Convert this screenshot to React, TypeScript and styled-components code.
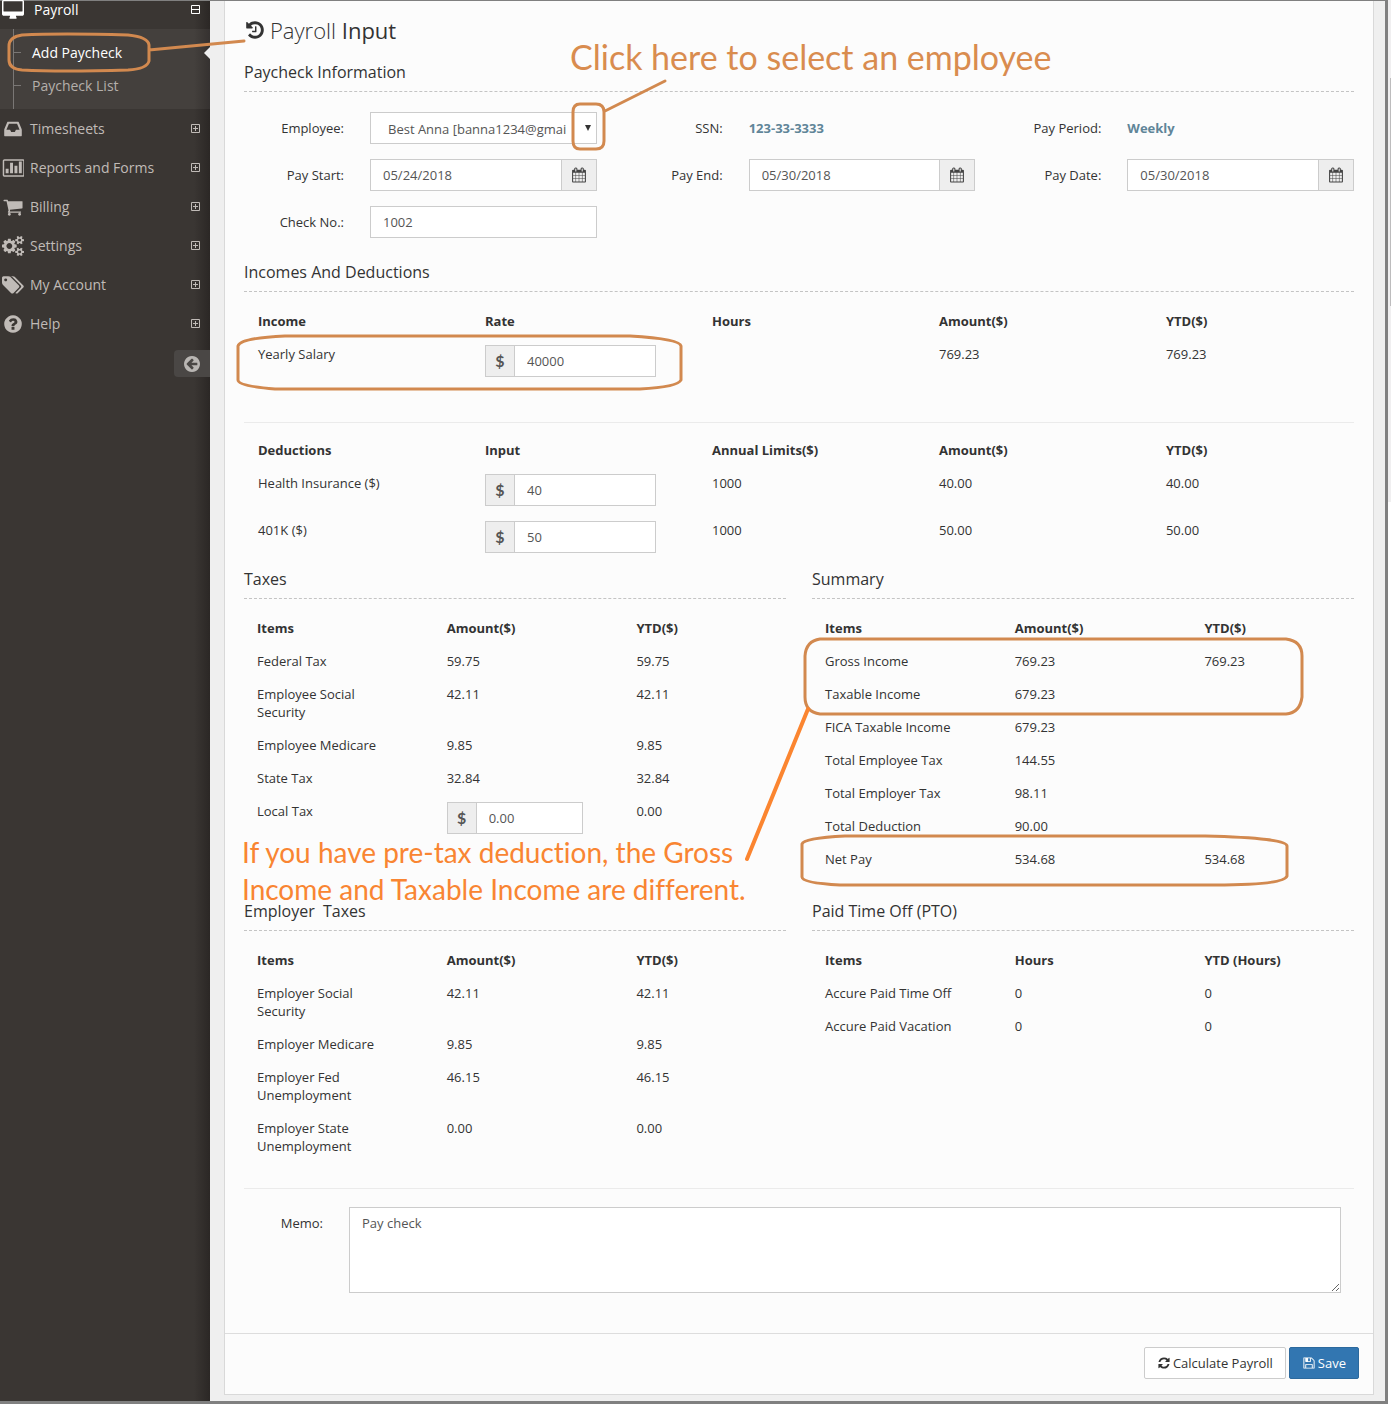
import React from 'react';
import styled, { createGlobalStyle, css } from 'styled-components';

const GlobalStyle = createGlobalStyle`
  *, *::before, *::after { box-sizing: border-box; }
  body {
    margin: 0;
    background: #fff;
    color: #333;
    font: 13px/18px "Open Sans", "Noto Sans", sans-serif;
  }
  input, select, textarea, button { font: inherit; border-radius: 0; }
`;

/* ---------- icons ---------- */

const ICONS = {
  desktop:
    'M1728 992v-832q0-13-9.5-22.5t-22.5-9.5h-1600q-13 0-22.5 9.5t-9.5 22.5v832q0 13 9.5 22.5t22.5 9.5h1600q13 0 22.5-9.5t9.5-22.5zm128-832v1088q0 66-47 113t-113 47h-544q0 37 16 77.5t32 71 16 43.5q0 26-19 45t-45 19h-512q-26 0-45-19t-19-45q0-14 16-44t32-70 16-78h-544q-66 0-113-47t-47-113v-1088q0-66 47-113t113-47h1600q66 0 113 47t47 113z',
  inbox:
    'M1151 960h316q-1-3-2.5-8t-2.5-8l-212-496h-708l-212 496q-1 2-2.5 8t-2.5 8h316l95 192h320zm513 30v482q0 26-19 45t-45 19h-1408q-26 0-45-19t-19-45v-482q0-62 25-123l238-552q10-25 36.5-42t52.5-17h832q26 0 52.5 17t36.5 42l238 552q25 61 25 123z',
  chart:
    'M512 960v384h-256v-384h256zm384-512v896h-256v-896h256zm384 256v640h-256v-640h256zm384-384v1024h-256v-1024h256zm128 1184v-1216q0-13-9.500-22.500t-22.500-9.500h-1600q-13 0-22.500 9.500t-9.500 22.500v1216q0 13 9.500 22.500t22.500 9.500h1600q13 0 22.500-9.500t9.500-22.500zm128-1216v1216q0 66-47 113t-113 47h-1600q-66 0-113-47t-47-113v-1216q0-66 47-113t113-47h1600q66 0 113 47t47 113z',
  cart:
    'M704 1536q0 52-38 90t-90 38-90-38-38-90 38-90 90-38 90 38 38 90zm896 0q0 52-38 90t-90 38-90-38-38-90 38-90 90-38 90 38 38 90zm128-1088v512q0 24-16.5 42.5t-40.5 21.5l-1044 122q13 60 13 70 0 16-24 64h920q26 0 45 19t19 45-19 45-45 19h-1024q-26 0-45-19t-19-45q0-11 8-31.5t16-36 21.5-40 15.5-29.5l-177-823h-204q-26 0-45-19t-19-45 19-45 45-19h256q16 0 28.500 6.500t19.500 15.500 13 24.500 8 26 5.500 29.500 4.500 26h1201q26 0 45 19t19 45z',
  cogs:
    'M832 896q0-106-75-181t-181-75-181 75-75 181 75 181 181 75 181-75 75-181zm768 512q0-52-38-90t-90-38-90 38-38 90q0 53 37.5 90.5t90.5 37.5 90.5-37.5 37.5-90.5zm0-1024q0-52-38-90t-90-38-90 38-38 90q0 53 37.5 90.5t90.5 37.5 90.5-37.5 37.5-90.5zm-384 421v185q0 10-7 19.5t-16 10.5l-155 24q-11 35-32 76 34 48 90 115 7 11 7 20 0 12-7 19-23 30-82.5 89.5t-78.5 59.5q-11 0-21-7l-115-90q-37 19-77 31-11 108-23 155-7 24-30 24h-186q-11 0-20-7.5t-10-17.5l-23-153q-34-10-75-31l-118 89q-7 7-20 7-11 0-21-8-144-133-144-160 0-9 7-19 10-14 41-53t47-61q-23-44-35-82l-152-24q-10-1-17-9.5t-7-19.5v-185q0-10 7-19.5t16-10.5l155-24q11-35 32-76-34-48-90-115-7-11-7-20 0-12 7-20 22-30 82-89t79-59q11 0 21 7l115 90q34-18 77-32 11-108 23-154 7-24 30-24h186q11 0 20 7.500t10 17.500l23 153q34 10 75 31l118-89q8-7 20-7 11 0 21 8 144 133 144 160 0 8-7 19-12 16-42 54t-45 60q23 48 34 82l152 23q10 2 17 10.5t7 19.5zm640 533v140q0 16-149 31-12 27-30 52 51 113 51 138 0 4-4 7-122 71-124 71-8 0-46-47t-52-68q-20 2-30 2t-30-2q-14 21-52 68t-46 47q-2 0-124-71-4-3-4-7 0-25 51-138-18-25-30-52-149-15-149-31v-140q0-16 149-31 13-29 30-52-51-113-51-138 0-4 4-7 4-2 35-20t59-34 30-16q8 0 46 46.5t52 67.5q20-2 30-2t30 2q51-71 92-112l6-2q4 0 124 70 4 3 4 7 0 25-51 138 17 23 30 52 149 15 149 31zm0-1024v140q0 16-149 31-12 27-30 52 51 113 51 138 0 4-4 7-122 71-124 71-8 0-46-47t-52-68q-20 2-30 2t-30-2q-14 21-52 68t-46 47q-2 0-124-71-4-3-4-7 0-25 51-138-18-25-30-52-149-15-149-31v-140q0-16 149-31 13-29 30-52-51-113-51-138 0-4 4-7 4-2 35-20t59-34 30-16q8 0 46 46.5t52 67.5q20-2 30-2t30 2q51-71 92-112l6-2q4 0 124 70 4 3 4 7 0 25-51 138 17 23 30 52 149 15 149 31z',
  tags:
    'M384 448q0-53-37.5-90.5t-90.5-37.5-90.5 37.5-37.5 90.5 37.5 90.5 90.5 37.5 90.5-37.5 37.5-90.5zm1067 576q0 53-37 90l-491 492q-39 37-91 37-53 0-90-37l-715-716q-38-37-64.5-101t-26.5-117v-416q0-52 38-90t90-38h416q53 0 117 26.5t102 64.5l715 714q37 39 37 91zm384 0q0 53-37 90l-491 492q-39 37-91 37-36 0-59-14t-53-45l470-470q37-37 37-90 0-52-37-91l-715-714q-38-38-102-64.5t-117-26.5h224q53 0 117 26.5t102 64.5l715 714q37 39 37 91z',
  help:
    'M1024 1376v-192q0-14-9-23t-23-9h-192q-14 0-23 9t-9 23v192q0 14 9 23t23 9h192q14 0 23-9t9-23zm256-672q0-88-55.5-163t-138.5-116-170-41q-243 0-371 213-15 24 8 42l132 100q7 6 19 6 16 0 25-12 53-68 86-92 34-24 86-24 48 0 85.5 26t37.5 59q0 38-20 61t-68 45q-63 28-115.5 86.5t-52.5 125.5v36q0 14 9 23t23 9h192q14 0 23-9t9-23q0-19 21.5-49.5t54.5-49.5q32-18 49-28.5t46-35 44.5-48 28-60.5 12.5-81zm384 192q0 209-103 385.5t-279.5 279.5-385.5 103-385.5-103-279.5-279.5-103-385.5 103-385.5 279.5-279.5 385.5-103 385.5 103 279.5 279.5 103 385.5z',
  back:
    'M1408 960v-128q0-26-19-45t-45-19h-502l189-189q19-19 19-45t-19-45l-91-91q-18-18-45-18t-45 18l-362 362-91 91q-18 18-18 45t18 45l91 91 362 362q18 18 45 18t45-18l91-91q18-18 18-45t-18-45l-189-189h502q26 0 45-19t19-45zm256-64q0 209-103 385.5t-279.5 279.5-385.5 103-385.5-103-279.5-279.5-103-385.5 103-385.5 279.5-279.5 385.5-103 385.5 103 279.5 279.5 103 385.5z',
  history:
    'M1664 896q0 156-61 298t-164 245-245 164-298 61q-172 0-327-72.5t-264-204.5q-7-10-6.5-22.5t8.5-20.5l137-138q10-9 25-9 16 2 23 12 73 95 179 147t225 52q104 0 198.5-40.5t163.5-109.5 109.5-163.5 40.5-198.5-40.5-198.5-109.5-163.5-163.5-109.5-198.5-40.5q-98 0-188 35.5t-160 101.5l137 138q31 30 14 69-17 40-59 40h-448q-26 0-45-19t-19-45v-448q0-42 40-59 39-17 69 14l130 129q107-101 244.5-156.5t284.5-55.5q156 0 298 61t245 164 164 245 61 298zm-640-288v448q0 14-9 23t-23 9h-320q-14 0-23-9t-9-23v-64q0-14 9-23t23-9h224v-352q0-14 9-23t23-9h64q14 0 23 9t9 23z',
  calendar:
    'M192 1664h288v-288h-288v288zm352 0h320v-288h-320v288zm-352-352h288v-320h-288v320zm352 0h320v-320h-320v320zm-352-384h288v-288h-288v288zm736 736h320v-288h-320v288zm-384-736h320v-288h-320v288zm768 736h288v-288h-288v288zm-384-352h320v-320h-320v320zm-352-864v-288q0-13-9.5-22.5t-22.5-9.5h-64q-13 0-22.5 9.5t-9.5 22.5v288q0 13 9.5 22.5t22.5 9.5h64q13 0 22.5-9.5t9.5-22.5zm736 864h288v-320h-288v320zm-384-384h320v-288h-320v288zm384 0h288v-288h-288v288zm32-480v-288q0-13-9.5-22.5t-22.5-9.5h-64q-13 0-22.5 9.5t-9.5 22.5v288q0 13 9.5 22.5t22.5 9.5h64q13 0 22.5-9.5t9.5-22.5zm384-64v1280q0 52-38 90t-90 38h-1408q-52 0-90-38t-38-90v-1280q0-52 38-90t90-38h128v-96q0-66 47-113t113-47h64q66 0 113 47t47 113v96h384v-96q0-66 47-113t113-47h64q66 0 113 47t47 113v96h128q52 0 90 38t38 90z',
  refresh:
    'M1639 1056q0 5-1 7-64 268-268 434.5t-478 166.5q-146 0-282.5-55t-243.5-157l-129 129q-19 19-45 19t-45-19-19-45v-448q0-26 19-45t45-19h448q26 0 45 19t19 45-19 45l-137 137q71 66 161 102t187 36q134 0 250-65t186-179q11-17 53-117 8-23 30-23h192q13 0 22.5 9.5t9.5 22.5zm25-800v448q0 26-19 45t-45 19h-448q-26 0-45-19t-19-45 19-45l138-138q-148-137-349-137-134 0-250 65t-186 179q-11 17-53 117-8 23-30 23h-199q-13 0-22.5-9.5t-9.5-22.5v-7q65-268 270-434.5t480-166.5q146 0 284 55.5t245 156.5l130-129q19-19 45-19t45 19 19 45z',
  save:
    'M512 1536h768v-384h-768v384zm896 0h128v-896q0-14-10-38.5t-20-34.5l-281-281q-10-10-34-20t-39-10v416q0 40-28 68t-68 28h-576q-40 0-68-28t-28-68v-416h-128v1280h128v-416q0-40 28-68t68-28h832q40 0 68 28t28 68v416zm-384-928v-320q0-13-9.5-22.5t-22.5-9.5h-192q-13 0-22.5 9.5t-9.5 22.5v320q0 13 9.5 22.5t22.5 9.5h192q13 0 22.5-9.5t9.5-22.5zm640 32v928q0 40-28 68t-68 28h-1344q-40 0-68-28t-28-68v-1344q0-40 28-68t68-28h928q40 0 88 20t76 48l280 280q28 28 48 76t20 88z',
};

type IconName = keyof typeof ICONS;

const Svg = styled.svg`
  display: block;
  flex: none;
  fill: currentColor;
`;

const Icon = ({ name, size }: { name: IconName; size: number }) => (
  <Svg width={size} height={size} viewBox="-64 -64 1920 1920" aria-hidden="true">
    <path d={ICONS[name]} />
  </Svg>
);

const Toggle = ({ open }: { open?: boolean }) => (
  <Svg width="11" height="11" viewBox="0 0 11 11" aria-hidden="true">
    <path
      d={open ? 'M1.5 1.5h8v8h-8zM2 5.5h7' : 'M1.5 1.5h8v8h-8zM3 5.5h5M5.5 3v5'}
      fill="none"
      stroke="currentColor"
    />
  </Svg>
);

/* ---------- shell ---------- */

const Page = styled.div`
  position: relative;
  display: flex;
  align-items: flex-start;
  min-height: 100vh;
`;

const Frame = styled.div`
  flex: 1;
  min-width: 0;
  display: flex;
  border: solid #808080;
  border-width: 1px 3px 3px 0;
`;

const ScrollTrack = styled.div`
  flex: none;
  width: 3px;
  height: 502px;
  padding: 78px 0 0 2px;
  background: #f0eff0;
  &::before {
    content: '';
    display: block;
    height: 228px;
    background: #bdbcbd;
  }
`;

const Sidebar = styled.nav`
  flex: none;
  width: 210px;
  background: linear-gradient(to left, #2b2725, #3a3633 16px);
  color: #c0bbb7;
  font-size: 14px;
  line-height: 20px;
`;

const Menu = styled.ul`
  list-style: none;
  margin: 0;
  padding: 0;
`;

const MenuLink = styled.a<{ $first?: boolean }>`
  display: flex;
  align-items: center;
  gap: ${(p) => (p.$first ? 10 : 6)}px;
  height: 39px;
  padding: 0 9px 0 2px;
  color: inherit;
  text-decoration: none;
  ${(p) =>
    p.$first &&
    css`
      height: 28px;
      padding-bottom: 11px;
      color: #fff;
      font-weight: 500;
    `}
`;

const MenuText = styled.span`
  flex: 1;
`;

const SubMenu = styled.ul`
  list-style: none;
  margin: 0;
  padding: 7px 0 7px 13px;
  background: linear-gradient(to right, transparent 13px, #7a7775 13px, #7a7775 14px, transparent 14px),
    rgba(255, 255, 255, 0.05);
`;

const SubItem = styled.li<{ $active?: boolean }>`
  display: flex;
  justify-content: space-between;
  align-items: center;
  height: 33px;
  color: ${(p) => (p.$active ? '#fff' : '#b4afab')};
  font-weight: ${(p) => (p.$active ? 500 : 400)};
  a { color: inherit; text-decoration: none; display: flex; align-items: center; }
  a::before {
    content: '';
    width: 8px;
    height: 1px;
    margin-right: 11px;
    background: #7a7775;
  }
  ${(p) =>
    p.$active &&
    css`
      &::after {
        content: '';
        border: solid transparent;
        border-width: 6px 6px 6px 0;
        border-right-color: #efefef;
      }
    `}
`;

const Collapse = styled.button`
  display: flex;
  align-items: center;
  width: 36px;
  height: 27px;
  margin: 7px 0 0 auto;
  padding: 0 0 0 8px;
  border: 0;
  border-radius: 4px 0 0 4px;
  background: #4a4745;
  color: #b9b6b3;
`;

const Main = styled.main`
  flex: 1;
  min-width: 0;
  padding: 0 11px 6px 14px;
  background: #efefef;
`;

const Panel = styled.form`
  border: 1px solid #d9d9d9;
  border-top: 0;
  background: #fcfcfc;
`;

const Body = styled.div`
  padding: 17px 19px 40px;
`;

const Title = styled.h1`
  display: flex;
  align-items: center;
  gap: 4px;
  margin: 0 0 20px;
  color: #333;
  font-size: 22px;
  line-height: 24px;
  font-weight: 300;
  span { font-weight: 400; }
`;

const Legend = styled.h2`
  margin: 0 0 20px;
  padding-bottom: 9px;
  border-bottom: 1px dashed #c4c4c4;
  color: #333;
  font-size: 16px;
  line-height: 20px;
  font-weight: 400;
`;

/* ---------- form ---------- */

const Fields = styled.div`
  display: grid;
  grid-template-columns: repeat(3, minmax(0, 1fr));
  gap: 15px 26px;
  margin-bottom: 24px;
`;

const Field = styled.div<{ $start?: boolean }>`
  display: flex;
  align-items: center;
  gap: 26px;
  height: 32px;
  ${(p) => p.$start && 'grid-column: 1;'}
`;

const Label = styled.label<{ $width?: number }>`
  flex: none;
  width: ${(p) => p.$width || 100}px;
  text-align: right;
`;

const Value = styled.output`
  color: #608598;
  font-weight: 700;
`;

const control = css`
  flex: 1;
  min-width: 0;
  width: 100%;
  height: 32px;
  border: 1px solid #ccc;
  background: #fff;
  color: #555;
  outline: 0;
`;

const Input = styled.input`
  ${control}
  padding: 0 12px;
`;

const SelectBox = styled.div`
  position: relative;
  flex: 1;
  min-width: 0;
  svg {
    position: absolute;
    right: 6px;
    top: 13px;
    pointer-events: none;
  }
`;

const Select = styled.select`
  ${control}
  appearance: none;
  padding: 2px 30px 0 17px;
`;

const Group = styled.div`
  display: flex;
  flex: 1;
  min-width: 0;
`;

const Prefix = styled.span`
  flex: none;
  width: 29px;
  border: 1px solid #ccc;
  border-right: 0;
  background: #eee;
  color: #555;
  font-family: Lato, "Open Sans", sans-serif;
  font-size: 16px;
  line-height: 30px;
  font-weight: 700;
  text-align: center;
`;

const PickButton = styled.button`
  display: flex;
  align-items: center;
  justify-content: center;
  flex: none;
  width: 35px;
  padding: 0;
  border: 1px solid #ccc;
  border-left: 0;
  background: #eee;
  color: #444;
`;

const Memo = styled.textarea`
  ${control}
  display: block;
  height: 86px;
  padding: 6px 12px;
`;

const MemoRow = styled.div`
  display: flex;
  align-items: flex-start;
  gap: 26px;
  padding-right: 13px;
  label { padding-top: 7px; }
`;

const Rule = styled.hr<{ $gap: number }>`
  height: 1px;
  margin: ${(p) => p.$gap}px 0 18px;
  border: 0;
  background: #ebebeb;
`;

/* ---------- tables ---------- */

const Table = styled.table<{ $wide?: boolean }>`
  width: 100%;
  table-layout: fixed;
  border-collapse: collapse;
  th, td {
    padding: ${(p) => (p.$wide ? '0 42px 15px 14px' : '0 40px 15px 13px')};
    text-align: left;
    vertical-align: top;
    font-weight: 400;
  }
  th:last-child, td:last-child { padding-right: 0; }
  thead th { font-weight: 700; }
  thead th:not(:last-child) { width: ${(p) => (p.$wide ? '20.45%' : '35%')}; }
`;

const Columns = styled.div`
  display: grid;
  grid-template-columns: repeat(2, minmax(0, 1fr));
  gap: 18px 26px;
  margin-top: 1px;
`;

const Footer = styled.footer`
  display: flex;
  justify-content: flex-end;
  gap: 3px;
  padding: 13px 14px 15px;
  border-top: 1px solid #ddd;
`;

const Button = styled.button<{ $primary?: boolean }>`
  display: flex;
  align-items: center;
  gap: 2px;
  height: 32px;
  padding: 0 12px;
  border: 1px solid ${(p) => (p.$primary ? '#2c699d' : '#ccc')};
  border-radius: 2px;
  background: ${(p) => (p.$primary ? '#3276b1' : '#fff')};
  color: ${(p) => (p.$primary ? '#fff' : '#333')};
`;

/* ---------- annotations drawn over the page ---------- */

const Marks = styled.svg`
  position: absolute;
  top: 0;
  left: 0;
  width: 1391px;
  height: 1410px;
  fill: none;
  stroke: #d2894f;
  stroke-width: 3;
  stroke-linecap: round;
  pointer-events: none;
`;

const Note = styled.p<{ $x: number; $y: number; $size: number; $color: string }>`
  position: absolute;
  left: ${(p) => p.$x}px;
  top: ${(p) => p.$y}px;
  margin: 0;
  color: ${(p) => p.$color};
  font-family: Lato, "Open Sans", sans-serif;
  font-size: ${(p) => p.$size}px;
  line-height: 37px;
  font-variant-ligatures: none;
  white-space: nowrap;
`;

/* ---------- data ---------- */

const MENU: [IconName, string][] = [
  ['inbox', 'Timesheets'],
  ['chart', 'Reports and Forms'],
  ['cart', 'Billing'],
  ['cogs', 'Settings'],
  ['tags', 'My Account'],
  ['help', 'Help'],
];

type Cell = string | { input: string };

interface GridProps {
  wide?: boolean;
  head: string[];
  rows: Cell[][];
}

const DataTable = ({ wide, head, rows }: GridProps) => (
  <Table $wide={wide}>
    <thead>
      <tr>{head.map((h) => <th key={h} scope="col">{h}</th>)}</tr>
    </thead>
    <tbody>
      {rows.map((row) => (
        <tr key={String(row[0])}>
          {row.map((cell, i) =>
            i === 0 ? (
              <th key={i} scope="row">{cell as string}</th>
            ) : (
              <td key={i}>
                {typeof cell === 'string' ? cell : (
                  <Group>
                    <Prefix>$</Prefix>
                    <Input aria-label={String(row[0])} defaultValue={cell.input} />
                  </Group>
                )}
              </td>
            ),
          )}
        </tr>
      ))}
    </tbody>
  </Table>
);

const DateField = ({ id, label, value }: { id: string; label: string; value: string }) => (
  <Field>
    <Label htmlFor={id}>{label}</Label>
    <Group>
      <Input id={id} defaultValue={value} />
      <PickButton type="button" aria-label={`Choose ${label}`}>
        <Icon name="calendar" size={16} />
      </PickButton>
    </Group>
  </Field>
);

export default function App() {
  return (
    <Page>
      <GlobalStyle />
      <Frame>
        <Sidebar>
          <Menu>
            <li>
              <MenuLink href="#payroll" $first>
                <Icon name="desktop" size={22} />
                <MenuText>Payroll</MenuText>
                <Toggle open />
              </MenuLink>
              <SubMenu>
                <SubItem $active><a href="#add">Add Paycheck</a></SubItem>
                <SubItem><a href="#list">Paycheck List</a></SubItem>
              </SubMenu>
            </li>
            {MENU.map(([icon, text]) => (
              <li key={text}>
                <MenuLink href={`#${icon}`}>
                  <Icon name={icon} size={22} />
                  <MenuText>{text}</MenuText>
                  <Toggle />
                </MenuLink>
              </li>
            ))}
          </Menu>
          <Collapse type="button" aria-label="Collapse menu">
            <Icon name="back" size={20} />
          </Collapse>
        </Sidebar>

        <Main>
          <Panel onSubmit={(e) => e.preventDefault()}>
            <Body>
              <Title>
                <Icon name="history" size={22} />
                <div>Payroll <span>Input</span></div>
              </Title>

              <Legend>Paycheck Information</Legend>
              <Fields>
                <Field>
                  <Label htmlFor="employee">Employee:</Label>
                  <SelectBox>
                    <Select id="employee">
                      <option>Best Anna [banna1234@gmai</option>
                    </Select>
                    <Svg width="6" height="6" viewBox="0 0 6 6" aria-hidden="true">
                      <path d="M0 0h6L3 6z" />
                    </Svg>
                  </SelectBox>
                </Field>
                <Field>
                  <Label htmlFor="ssn">SSN:</Label>
                  <Value id="ssn">123-33-3333</Value>
                </Field>
                <Field>
                  <Label htmlFor="period">Pay Period:</Label>
                  <Value id="period">Weekly</Value>
                </Field>
                <DateField id="start" label="Pay Start:" value="05/24/2018" />
                <DateField id="end" label="Pay End:" value="05/30/2018" />
                <DateField id="date" label="Pay Date:" value="05/30/2018" />
                <Field $start>
                  <Label htmlFor="check">Check No.:</Label>
                  <Input id="check" defaultValue="1002" />
                </Field>
              </Fields>

              <Legend>Incomes And Deductions</Legend>
              <DataTable
                wide
                head={['Income', 'Rate', 'Hours', 'Amount($)', 'YTD($)']}
                rows={[['Yearly Salary', { input: '40000' }, '', '769.23', '769.23']]}
              />
              <Rule $gap={30} />
              <DataTable
                wide
                head={['Deductions', 'Input', 'Annual Limits($)', 'Amount($)', 'YTD($)']}
                rows={[
                  ['Health Insurance ($)', { input: '40' }, '1000', '40.00', '40.00'],
                  ['401K ($)', { input: '50' }, '1000', '50.00', '50.00'],
                ]}
              />

              <Columns>
                <section>
                  <Legend>Taxes</Legend>
                  <DataTable
                    head={['Items', 'Amount($)', 'YTD($)']}
                    rows={[
                      ['Federal Tax', '59.75', '59.75'],
                      ['Employee Social Security', '42.11', '42.11'],
                      ['Employee Medicare', '9.85', '9.85'],
                      ['State Tax', '32.84', '32.84'],
                      ['Local Tax', { input: '0.00' }, '0.00'],
                    ]}
                  />
                </section>
                <section>
                  <Legend>Summary</Legend>
                  <DataTable
                    head={['Items', 'Amount($)', 'YTD($)']}
                    rows={[
                      ['Gross Income', '769.23', '769.23'],
                      ['Taxable Income', '679.23', ''],
                      ['FICA Taxable Income', '679.23', ''],
                      ['Total Employee Tax', '144.55', ''],
                      ['Total Employer Tax', '98.11', ''],
                      ['Total Deduction', '90.00', ''],
                      ['Net Pay', '534.68', '534.68'],
                    ]}
                  />
                </section>
                <section>
                  <Legend>Employer&nbsp; Taxes</Legend>
                  <DataTable
                    head={['Items', 'Amount($)', 'YTD($)']}
                    rows={[
                      ['Employer Social Security', '42.11', '42.11'],
                      ['Employer Medicare', '9.85', '9.85'],
                      ['Employer Fed Unemployment', '46.15', '46.15'],
                      ['Employer State Unemployment', '0.00', '0.00'],
                    ]}
                  />
                </section>
                <section>
                  <Legend>Paid Time Off (PTO)</Legend>
                  <DataTable
                    head={['Items', 'Hours', 'YTD (Hours)']}
                    rows={[
                      ['Accure Paid Time Off', '0', '0'],
                      ['Accure Paid Vacation', '0', '0'],
                    ]}
                  />
                </section>
              </Columns>

              <Rule $gap={18} />
              <MemoRow>
                <Label htmlFor="memo" $width={79}>Memo:</Label>
                <Memo id="memo" defaultValue="Pay check" />
              </MemoRow>
            </Body>
            <Footer>
              <Button type="button">
                <Icon name="refresh" size={14} />
                Calculate Payroll
              </Button>
              <Button type="submit" $primary>
                <Icon name="save" size={14} />
                Save
              </Button>
            </Footer>
          </Panel>
        </Main>
      </Frame>
      <ScrollTrack />

      <Marks viewBox="0 0 1391 1410" aria-hidden="true">
        <path d="M22 35Q60 33 128 35Q148 37 149 45V61Q147 69 128 70Q60 72 22 70Q9 69 9 60V46Q9 37 22 35ZM149 50L244 41" />
        <path d="M580 104H596Q604 104 604 112V141Q604 149 596 149H580Q573 149 573 141V112Q573 104 580 104ZM605 111L665 81" />
        <path d="M285 336H630Q680 339 681 346V380Q678 387 640 389H275Q238 386 238 380V346Q240 338 285 336Z" />
        <path d="M820 639H1286Q1302 641 1302 656V697Q1300 713 1286 714H820Q805 712 805 697V656Q806 641 820 639Z" />
        <path d="M845 836H1205Q1287 838 1287 846V876Q1284 885 1215 885H840Q802 883 802 877V844Q804 838 845 836Z" />
        <path d="M808 709L747 859" stroke="#fb8530" strokeWidth="4" />
      </Marks>
      <Note $x={570} $y={38} $size={34} $color="#d98c4f">Click here to select an employee</Note>
      <Note $x={242} $y={834} $size={28} $color="#f98532">
        If you have pre-tax deduction, the Gross
        <br />
        Income and Taxable Income are different.
      </Note>
    </Page>
  );
}
